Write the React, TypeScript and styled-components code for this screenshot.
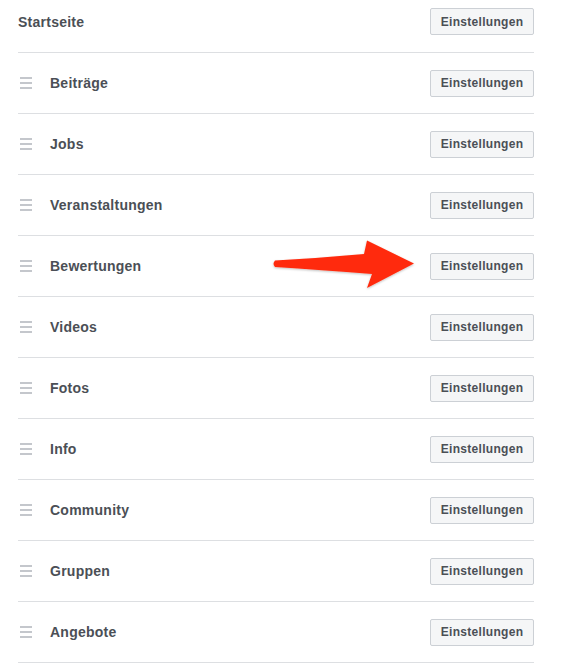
import React from 'react';
import styled, { createGlobalStyle } from 'styled-components';

const GlobalStyle = createGlobalStyle`
  html, body {
    margin: 0;
    padding: 0;
    background: #ffffff;
  }
  body {
    font-family: 'Liberation Sans', Arial, sans-serif;
    -webkit-font-smoothing: antialiased;
  }
`;

const tabs = [
  'Beiträge',
  'Jobs',
  'Veranstaltungen',
  'Bewertungen',
  'Videos',
  'Fotos',
  'Info',
  'Community',
  'Gruppen',
  'Angebote',
];

const Page = styled.div`
  width: 570px;
  height: 670px;
  overflow: hidden;
  position: relative;
`;

const List = styled.ul`
  list-style: none;
  margin: 0 0 0 18px;
  padding: 0;
  width: 516px;
`;

const Row = styled.li<{ first?: boolean }>`
  display: flex;
  align-items: center;
  box-sizing: content-box;
  height: ${(p) => (p.first ? '43px' : '60px')};
  padding-bottom: ${(p) => (p.first ? '9px' : '0')};
  border-bottom: 1px solid #dddfe2;
`;

const Handle = styled.span`
  display: flex;
  flex-direction: column;
  gap: 3px;
  width: 12px;
  margin: 0 18px 0 2px;

  span {
    display: block;
    height: 2px;
    background: #c4c7cc;
  }
`;

const Label = styled.span`
  flex: 1;
  font-size: 14px;
  font-weight: bold;
  letter-spacing: 0.25px;
  color: #4b4f56;
`;

const SettingsButton = styled.button`
  box-sizing: border-box;
  height: 27px;
  width: 104px;
  padding: 0;
  border: 1px solid #ccd0d5;
  border-radius: 2px;
  background: #f5f6f7;
  color: #4b4f56;
  font-family: 'Liberation Sans', Arial, sans-serif;
  font-size: 12px;
  font-weight: bold;
  letter-spacing: 0.3px;
  cursor: pointer;
`;

const Arrow = styled.svg`
  position: absolute;
  left: 268px;
  top: 236px;
  width: 152px;
  height: 58px;
  overflow: visible;
`;

const DragHandle = () => (
  <Handle>
    <span />
    <span />
    <span />
  </Handle>
);

const App: React.FC = () => (
  <Page>
    <GlobalStyle />
    <List>
      <Row first>
        <Label>Startseite</Label>
        <SettingsButton>Einstellungen</SettingsButton>
      </Row>
      {tabs.map((t) => (
        <Row key={t}>
          <DragHandle />
          <Label>{t}</Label>
          <SettingsButton>Einstellungen</SettingsButton>
        </Row>
      ))}
    </List>
    <Arrow viewBox="268 236 152 58">
      <defs>
        <linearGradient id="arrowFill" x1="0" y1="0" x2="1" y2="0">
          <stop offset="0" stopColor="#ff2a10" />
          <stop offset="1" stopColor="#ff2a0a" />
        </linearGradient>
        <filter id="arrowShadow" x="-10%" y="-20%" width="120%" height="150%">
          <feDropShadow dx="0" dy="1" stdDeviation="1.2" floodColor="#000" floodOpacity="0.25" />
        </filter>
      </defs>
      <path
        d="M275,260.5 Q320,258 364,254 L367,240.5 L414,263.5 L367,288 L372,274 Q320,270 275,267 Q272,263.8 275,260.5 Z"
        fill="url(#arrowFill)"
        filter="url(#arrowShadow)"
      />
    </Arrow>
  </Page>
);

export default App;
